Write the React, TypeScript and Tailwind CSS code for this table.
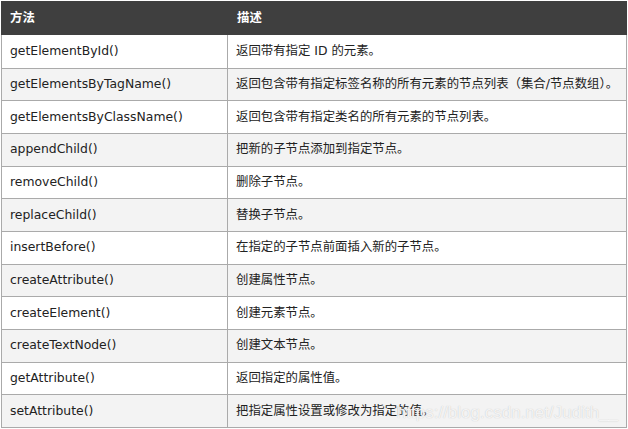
const rows: [string, string][] = [
  ["getElementById()", "返回带有指定 ID 的元素。"],
  ["getElementsByTagName()", "返回包含带有指定标签名称的所有元素的节点列表（集合/节点数组）。"],
  ["getElementsByClassName()", "返回包含带有指定类名的所有元素的节点列表。"],
  ["appendChild()", "把新的子节点添加到指定节点。"],
  ["removeChild()", "删除子节点。"],
  ["replaceChild()", "替换子节点。"],
  ["insertBefore()", "在指定的子节点前面插入新的子节点。"],
  ["createAttribute()", "创建属性节点。"],
  ["createElement()", "创建元素节点。"],
  ["createTextNode()", "创建文本节点。"],
  ["getAttribute()", "返回指定的属性值。"],
  ["setAttribute()", "把指定属性设置或修改为指定的值。"],
];

export default function App() {
  return (
    <div className="relative h-[429px] w-[628px] overflow-hidden bg-white font-['DejaVu_Sans','Noto_Sans_CJK_SC',sans-serif] text-[12.4px] text-[#222]">
      <div className="ml-px w-[626px] border-b border-[#aaaaaa]">
        <div className="mt-px flex h-[34px] items-center bg-[#3f3f3f] font-bold text-white">
          <div className="w-[227px] pl-[9px]">方法</div>
          <div className="flex-1 pl-[9px]">描述</div>
        </div>
        {rows.map(([method, desc], i) => (
          <div
            key={method}
            className={
              "flex h-[32.67px] border-x border-[#aaaaaa] " +
              (i === 0 ? "" : "border-t ") +
              (i % 2 === 0 ? "bg-white" : "bg-[#f3f3f3]")
            }
          >
            <div className="flex w-[226px] items-center border-r border-[#aaaaaa] pl-[8px]">{method}</div>
            <div className="flex flex-1 items-center whitespace-nowrap pl-[8px]">{desc}</div>
          </div>
        ))}
      </div>
      <span className="absolute right-[10px] top-[400px] whitespace-nowrap font-['Liberation_Sans',sans-serif] text-[17px] text-white/80 [text-shadow:0_0_1px_#bbbbbb]">
        https://blog.csdn.net/Judith__
      </span>
    </div>
  );
}
